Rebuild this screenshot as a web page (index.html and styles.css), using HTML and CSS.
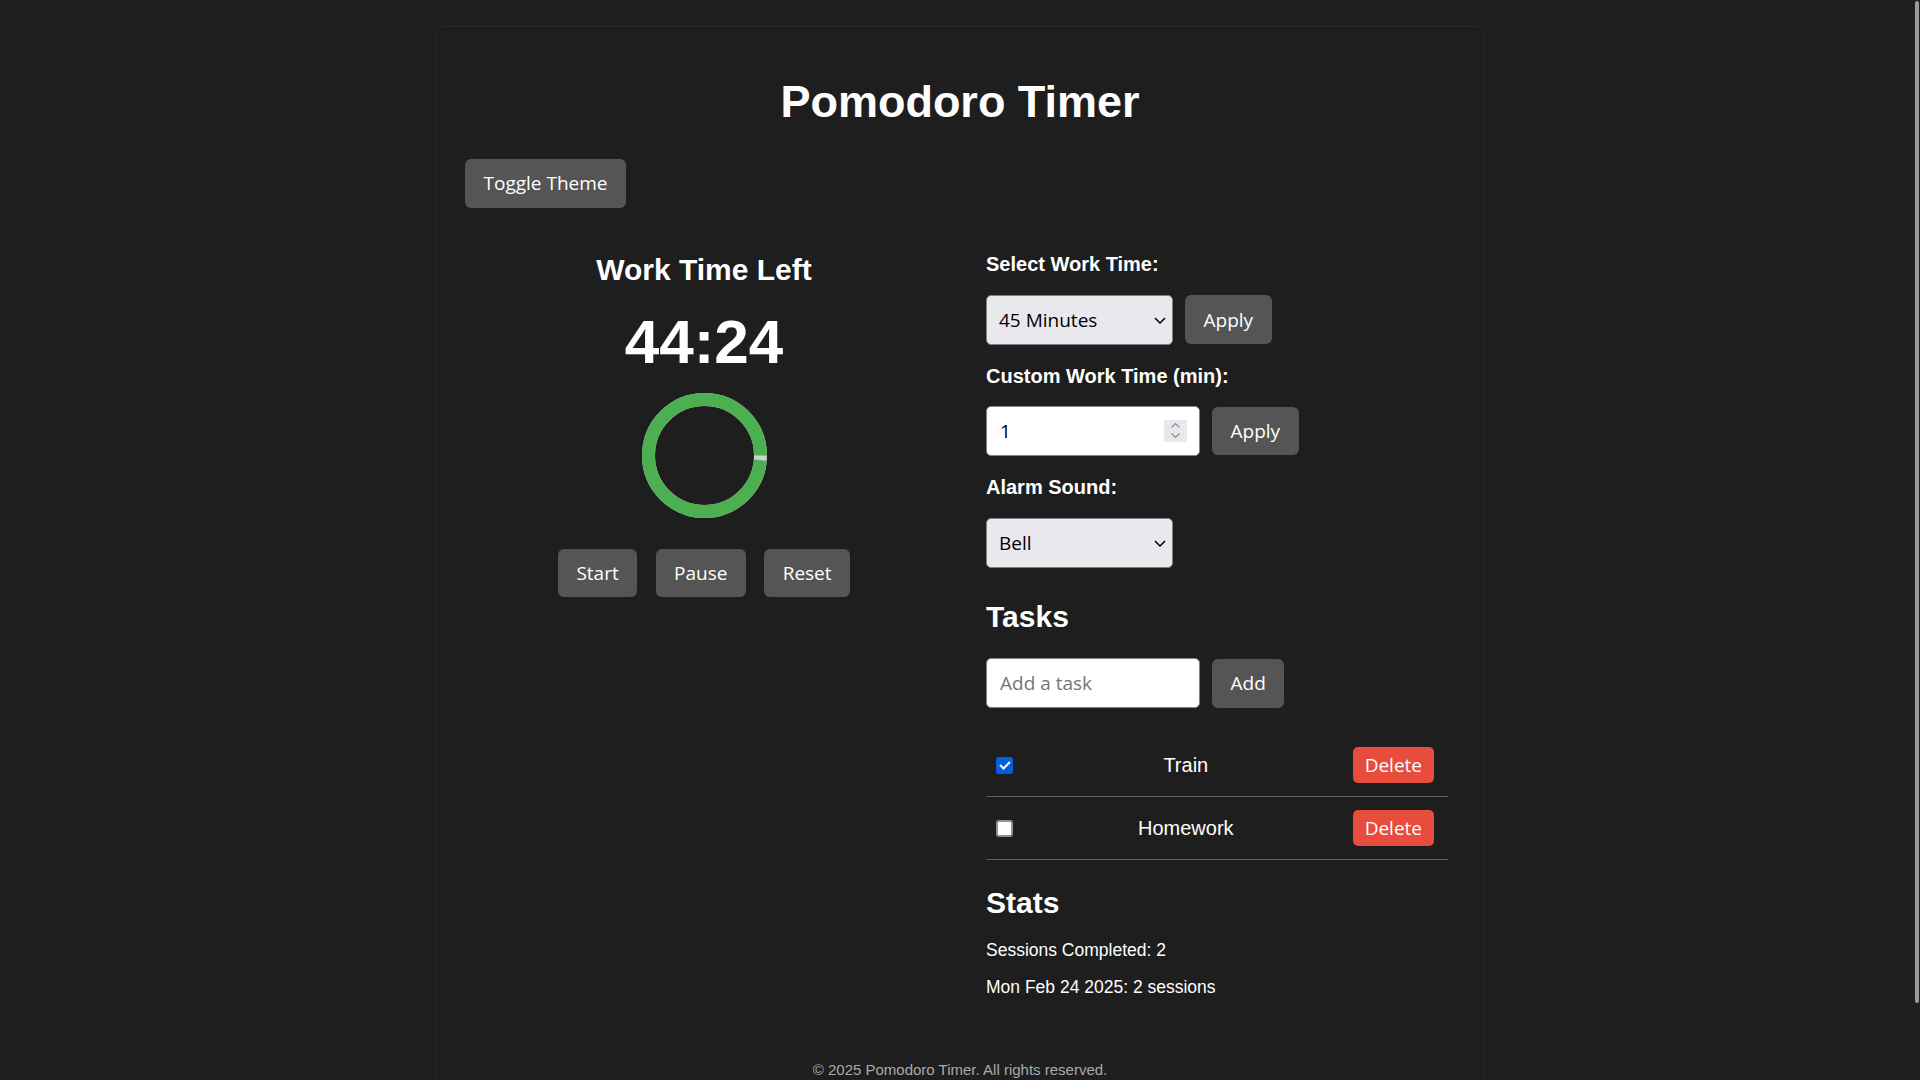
FILE: index.html
```html
<!DOCTYPE html>
<html lang="en">
<head>
<meta charset="utf-8">
<title>Pomodoro Timer</title>
<link rel="stylesheet" href="styles.css">
</head>
<body>
<div class="container">
  <h1 class="title">Pomodoro Timer</h1>
  <button class="btn btn-toggle">Toggle Theme</button>

  <div class="layout">
    <section class="timer-col">
      <h2 class="timer-label">Work Time Left</h2>
      <div class="timer">44:24</div>
      <svg class="ring" width="125" height="125" viewBox="0 0 125 125">
        <circle cx="62.5" cy="62.5" r="56" fill="none" stroke="#d0d0d0" stroke-width="13"/>
        <circle cx="62.5" cy="62.5" r="56" fill="none" stroke="#4caf50" stroke-width="13" stroke-dasharray="347.2 351.9" stroke-dashoffset="-4.7"/>
      </svg>
      <div class="controls">
        <button class="btn">Start</button>
        <button class="btn">Pause</button>
        <button class="btn">Reset</button>
      </div>
    </section>

    <section class="side-col">
      <label class="field-label">Select Work Time:</label>
      <div class="row">
        <div class="select-wrap">
          <select class="select"><option>45 Minutes</option></select>
          <svg class="chev" width="12" height="7" viewBox="0 0 12 7"><polyline points="1,1 6,6 11,1" fill="none" stroke="#000" stroke-width="1.5"/></svg>
        </div>
        <button class="btn">Apply</button>
      </div>

      <label class="field-label">Custom Work Time (min):</label>
      <div class="row">
        <div class="num-wrap">
          <input class="text-input num-input" type="number" value="1">
          <svg class="spin" width="23" height="22" viewBox="0 0 23 22">
            <rect width="23" height="22" fill="#e9e9ed"/>
            <polyline points="7.5,7.5 11.5,3.5 15.5,7.5" fill="none" stroke="#8a8a8a" stroke-width="1.1"/>
            <polyline points="7.5,13.5 11.5,17.5 15.5,13.5" fill="none" stroke="#8a8a8a" stroke-width="1.1"/>
          </svg>
        </div>
        <button class="btn">Apply</button>
      </div>

      <label class="field-label">Alarm Sound:</label>
      <div class="row row-last">
        <div class="select-wrap">
          <select class="select"><option>Bell</option></select>
          <svg class="chev" width="12" height="7" viewBox="0 0 12 7"><polyline points="1,1 6,6 11,1" fill="none" stroke="#000" stroke-width="1.5"/></svg>
        </div>
      </div>

      <h2 class="section-title tasks-title">Tasks</h2>
      <div class="row row-add">
        <input class="text-input" type="text" placeholder="Add a task">
        <button class="btn">Add</button>
      </div>
      <ul class="task-list">
        <li class="task">
          <input class="task-check" type="checkbox" checked>
          <span class="task-text">Train</span>
          <button class="btn btn-delete">Delete</button>
        </li>
        <li class="task">
          <input class="task-check" type="checkbox">
          <span class="task-text">Homework</span>
          <button class="btn btn-delete">Delete</button>
        </li>
      </ul>

      <h2 class="section-title stats-title">Stats</h2>
      <p class="stat">Sessions Completed: 2</p>
      <p class="stat stat-next">Mon Feb 24 2025: 2 sessions</p>
    </section>
  </div>

  <footer class="footer">© 2025 Pomodoro Timer. All rights reserved.</footer>
</div>
<div class="scroll-thumb"></div>
</body>
</html>
```

FILE: styles.css
```css
html, body {
  margin: 0;
  padding: 0;
}

body {
  background: #1e1e1e;
  color: #ffffff;
  font-family: "Liberation Sans", Arial, sans-serif;
  overflow: hidden;
}

.container {
  width: 1050px;
  box-sizing: border-box;
  margin: 25px auto 0;
  padding: 49px 28px 60px;
  border: 2px solid #242424;
  border-radius: 10px;
  background: #1e1e1e;
}

.title {
  margin: 0;
  text-align: center;
  font-size: 45px;
  line-height: 52px;
  font-weight: bold;
}

.btn {
  font-family: "Open Sans", "Noto Sans", sans-serif;
  font-size: 19px;
  line-height: 26px;
  padding: 11.25px 18.5px;
  background: #555555;
  color: #ffffff;
  border: none;
  border-radius: 6px;
  cursor: pointer;
}

.btn-toggle {
  display: block;
  margin-top: 31px;
}

.layout {
  display: grid;
  grid-template-columns: 478px 462px;
  column-gap: 43px;
  align-items: start;
  margin-top: 45.5px;
}

.timer-col {
  display: flex;
  flex-direction: column;
  align-items: center;
}

.timer-label {
  margin: 0;
  font-size: 30px;
  line-height: 34px;
  font-weight: bold;
}

.timer {
  margin-top: 18.7px;
  font-size: 62px;
  line-height: 71px;
  font-weight: bold;
}

.ring {
  display: block;
  margin-top: 16.3px;
}

.controls {
  display: flex;
  gap: 18.3px;
  margin-top: 31px;
}

.field-label {
  display: block;
  font-size: 20px;
  line-height: 23px;
  font-weight: bold;
  margin-bottom: 18.5px;
}

.row {
  display: flex;
  align-items: center;
  gap: 12px;
  margin-bottom: 20px;
}

.row-last {
  margin-bottom: 0;
}

.select-wrap,
.num-wrap {
  position: relative;
  display: flex;
}

.select {
  -webkit-appearance: none;
  appearance: none;
  width: 187px;
  height: 50px;
  box-sizing: border-box;
  padding: 0 30px 0 12px;
  font-family: "Open Sans", "Noto Sans", sans-serif;
  font-size: 19px;
  color: #000000;
  background: #e9e9ed;
  border: 1px solid #80808c;
  border-radius: 5px;
  outline: none;
}

.chev {
  position: absolute;
  right: 7px;
  top: 22px;
  pointer-events: none;
}

.text-input {
  width: 214px;
  height: 50px;
  box-sizing: border-box;
  padding: 0 13px;
  font-family: "Open Sans", "Noto Sans", sans-serif;
  font-size: 19px;
  color: #000000;
  background: #ffffff;
  border: 1px solid #80808c;
  border-radius: 5px;
  outline: none;
}

.text-input::placeholder {
  color: #767676;
}

.num-input {
  -moz-appearance: textfield;
  appearance: textfield;
}

.num-input::-webkit-inner-spin-button,
.num-input::-webkit-outer-spin-button {
  -webkit-appearance: none;
  margin: 0;
}

.spin {
  position: absolute;
  right: 13px;
  top: 14px;
  pointer-events: none;
}

.section-title {
  margin: 0;
  font-size: 30px;
  line-height: 34px;
  font-weight: bold;
}

.tasks-title {
  margin-top: 32.3px;
}

.row-add {
  margin-top: 24.5px;
  margin-bottom: 0;
}

.task-list {
  list-style: none;
  margin: 26px 0 0;
  padding: 0;
}

.task {
  display: flex;
  align-items: center;
  padding: 13.15px 14px 13.15px 10px;
  border-bottom: 1px solid #5e5e5e;
}

.task-check {
  -webkit-appearance: none;
  appearance: none;
  position: relative;
  width: 17px;
  height: 17px;
  box-sizing: border-box;
  margin: 0;
  background: #ffffff;
  border: 2px solid #8f8f9d;
  border-radius: 3px;
}

.task-check:checked {
  background: #0060df;
  border-color: #0060df;
}

.task-check:checked::after {
  content: "";
  position: absolute;
  left: 4px;
  top: 0.5px;
  width: 3.5px;
  height: 8px;
  border: solid #ffffff;
  border-width: 0 2.5px 2.5px 0;
  transform: rotate(45deg);
}

.task-text {
  flex: 1;
  margin-left: 6px;
  text-align: center;
  font-size: 20px;
  line-height: 23px;
  color: #ffffff;
}

.btn-delete {
  padding: 4.5px 12px;
  line-height: 26.7px;
  background: #e74c3c;
  border-radius: 5px;
}

.stats-title {
  margin-top: 25.5px;
}

.stat {
  margin: 20.1px 0 0;
  font-size: 17.5px;
  line-height: 20px;
}

.stat-next {
  margin-top: 17.6px;
}

.footer {
  margin-top: 64px;
  text-align: center;
  font-size: 15px;
  line-height: 17px;
  color: #aaaaaa;
}

.scroll-thumb {
  position: fixed;
  right: 1px;
  top: 1px;
  width: 4px;
  height: 1002px;
  border-radius: 2px;
  background: #9a9a9a;
}
```
